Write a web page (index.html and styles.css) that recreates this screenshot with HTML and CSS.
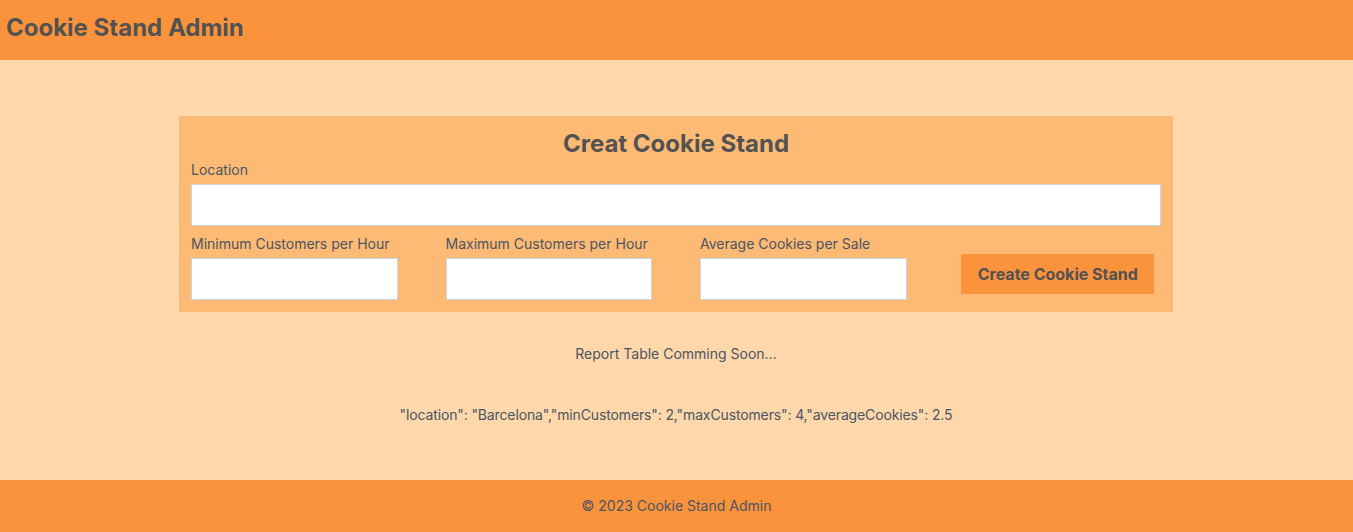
FILE: index.html
```html
<!DOCTYPE html>
<html lang="en">
<head>
<meta charset="utf-8">
<title>Cookie Stand Admin</title>
<link rel="stylesheet" href="styles.css">
</head>
<body>
<div class="page">
  <header class="header">
    <h1 class="brand">Cookie Stand Admin</h1>
  </header>
  <main class="main">
    <form class="stand-form">
      <h2 class="form-title">Creat Cookie Stand</h2>
      <div class="field">
        <label class="label" for="location">Location</label>
        <input class="input" id="location" type="text">
      </div>
      <div class="row">
        <div class="field">
          <label class="label" for="min">Minimum Customers per Hour</label>
          <input class="input" id="min" type="text">
        </div>
        <div class="field">
          <label class="label" for="max">Maximum Customers per Hour</label>
          <input class="input" id="max" type="text">
        </div>
        <div class="field">
          <label class="label" for="avg">Average Cookies per Sale</label>
          <input class="input" id="avg" type="text">
        </div>
        <div class="button-cell">
          <button class="submit" type="button">Create Cookie Stand</button>
        </div>
      </div>
    </form>
    <p class="report">Report Table Comming Soon...</p>
    <p class="json">"location": "Barcelona","minCustomers": 2,"maxCustomers": 4,"averageCookies": 2.5</p>
  </main>
  <footer class="footer">
    <p class="copy">© 2023 Cookie Stand Admin</p>
  </footer>
</div>
</body>
</html>
```

FILE: styles.css
```css
* { box-sizing: border-box; }
html, body { margin: 0; padding: 0; }
body {
  font-family: Inter, "Noto Sans", sans-serif;
  color: #4b5563;
}
.page {
  display: flex;
  flex-direction: column;
  min-height: 100vh;
}
.header {
  background: #fb923c;
  height: 60px;
  display: flex;
  align-items: center;
  padding: 0 6px;
}
.brand {
  margin: 0;
  font-size: 24px;
  line-height: 32px;
  font-weight: 700;
  color: #525252;
  position: relative;
  top: -2px;
}
.main {
  flex: 1;
  background: #fed7aa;
  display: flex;
  flex-direction: column;
  align-items: center;
  padding-right: 1px;
}
.stand-form {
  margin-top: 56px;
  width: 994px;
  background: #fdba74;
  padding: 12px 12px 12px;
  display: flex;
  flex-direction: column;
}
.form-title {
  margin: 0;
  text-align: center;
  font-size: 24px;
  line-height: 32px;
  font-weight: 700;
  color: #525252;
}
.field {
  display: flex;
  flex-direction: column;
  gap: 4px;
}
.label {
  font-size: 14px;
  line-height: 20px;
  color: #4b5563;
}
.input {
  height: 42px;
  width: 100%;
  border: 1px solid #cbd5e1;
  background: #fff;
  margin: 0;
  padding: 0 8px;
  font: inherit;
}
.row {
  margin-top: 8px;
  display: grid;
  grid-template-columns: repeat(4, 1fr);
  column-gap: 48px;
}
.button-cell {
  display: flex;
  justify-content: center;
  align-items: flex-end;
  padding-bottom: 6px;
}
.submit {
  width: 193px;
  height: 40px;
  border: 0;
  background: #fb923c;
  color: #525252;
  font-family: inherit;
  font-size: 16px;
  font-weight: 700;
  padding: 0;
}
.report {
  margin: 32px 0 0;
  font-size: 14px;
  line-height: 20px;
}
.json {
  margin: 41px 0 0;
  font-size: 14px;
  line-height: 20px;
  letter-spacing: -0.13px;
}
.footer {
  background: #fb923c;
  height: 52px;
  display: flex;
  align-items: center;
  justify-content: center;
}
.copy {
  margin: 0;
  font-size: 14px;
  line-height: 20px;
}
```
